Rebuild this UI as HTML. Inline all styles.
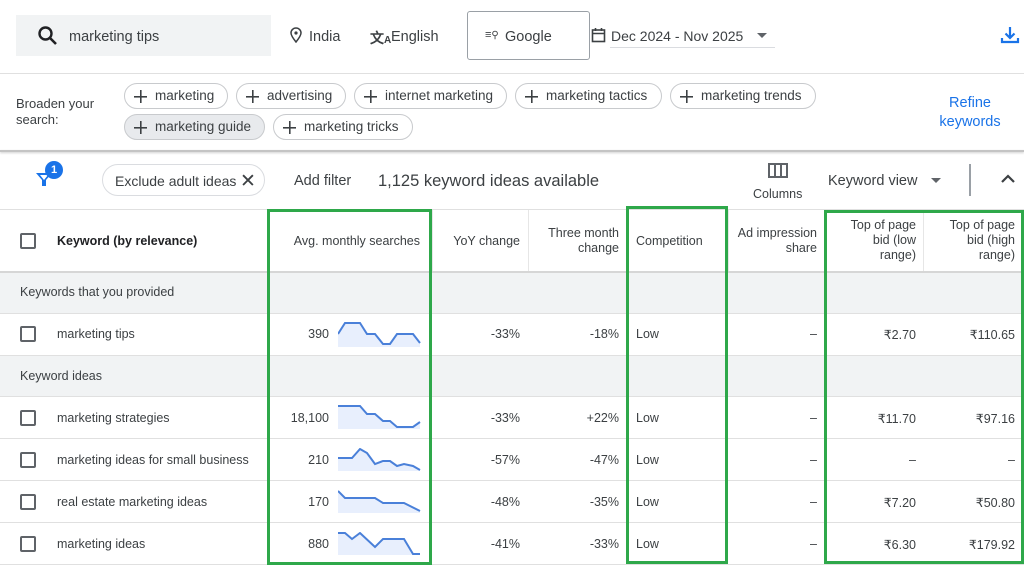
<!DOCTYPE html><html><head><meta charset="utf-8"><style>
*{margin:0;padding:0;box-sizing:border-box}
body{width:1024px;height:566px;overflow:hidden;background:#fff;font-family:"Liberation Sans",Arial,sans-serif;color:#3c4043;position:relative}
.a{position:absolute}
.chip{position:absolute;height:26px;border:1px solid #c8cacd;border-radius:13px;font-size:13.5px;color:#3c4043;line-height:24px;padding-left:30px;white-space:nowrap}
.chip:before{content:"";position:absolute;left:9px;top:6px;width:13px;height:13px;background:linear-gradient(#3c4043,#3c4043) center/13px 1.6px no-repeat,linear-gradient(#3c4043,#3c4043) center/1.6px 13px no-repeat}
.hl{position:absolute;left:0;width:1024px;height:1px;background:#e0e0e0}
.cb{position:absolute;left:20px;width:16px;height:16px;border:2px solid #5f6368;border-radius:2px}
.t{position:absolute;font-size:12.5px;color:#3c4043;white-space:nowrap}
.r{text-align:right}
.g{position:absolute;border:3px solid #2ea84a}
.vl{position:absolute;width:1px;background:#e6e6e6}
</style></head><body>
<!-- top bar -->
<div class="a" style="left:16px;top:15px;width:255px;height:41px;background:#f1f3f4"></div>
<svg class="a" style="left:37px;top:25px" width="22" height="22" viewBox="0 0 22 22"><circle cx="8.5" cy="8.5" r="6" fill="none" stroke="#202124" stroke-width="2.4"/><path d="M13 13l6 6" stroke="#202124" stroke-width="2.6"/></svg>
<div class="t" style="left:69px;top:29px;font-size:14.5px">marketing tips</div>
<svg class="a" style="left:289px;top:27px" width="14" height="16" viewBox="0 0 14 16"><path d="M7 15C3 10 2 8 2 6a5 5 0 0110 0c0 2-1 4-5 9z" fill="none" stroke="#3c4043" stroke-width="1.5"/><circle cx="7" cy="6" r="1.6" fill="#3c4043"/></svg>
<div class="t" style="left:309px;top:29px;font-size:14.5px">India</div>
<div class="t" style="left:370px;top:28px;font-size:14px;font-weight:bold">文<span style="font-size:10px">A</span></div>
<div class="t" style="left:391px;top:29px;font-size:14.5px">English</div>
<div class="a" style="left:467px;top:11px;width:123px;height:49px;border:1px solid #9aa0a6;border-radius:3px"></div>
<div class="t" style="left:485px;top:29px;font-size:11px">≡<span style="font-size:10px">⚲</span></div>
<div class="t" style="left:505px;top:29px;font-size:14.5px">Google</div>
<svg class="a" style="left:591px;top:27px" width="15" height="16" viewBox="0 0 15 16"><rect x="1.5" y="3" width="12" height="11.5" fill="none" stroke="#3c4043" stroke-width="1.6"/><path d="M1.5 6.5h12M4.5 1v3M10.5 1v3" stroke="#3c4043" stroke-width="1.6"/></svg>
<div class="t" style="left:611px;top:28px;font-size:14px">Dec 2024 - Nov 2025</div>
<div class="a" style="left:757px;top:33px;border-left:5px solid transparent;border-right:5px solid transparent;border-top:5px solid #5f6368"></div>
<div class="a" style="left:610px;top:47px;width:165px;height:1px;background:#dadce0"></div>
<svg class="a" style="left:1000px;top:25px" width="20" height="20" viewBox="0 0 20 20"><path d="M10 2v11M5.5 8.5L10 13l4.5-4.5M2 13v4h16v-4" fill="none" stroke="#1a73e8" stroke-width="2.2"/></svg>
<div class="hl" style="top:73px"></div>
<!-- broaden -->
<div class="t" style="left:16px;top:96px;font-size:13px;line-height:16px">Broaden your<br>search:</div>
<div class="chip" style="left:124px;top:83px;width:104px">marketing</div>
<div class="chip" style="left:236px;top:83px;width:110px">advertising</div>
<div class="chip" style="left:354px;top:83px;width:153px">internet marketing</div>
<div class="chip" style="left:515px;top:83px;width:147px">marketing tactics</div>
<div class="chip" style="left:670px;top:83px;width:146px">marketing trends</div>
<div class="chip" style="left:124px;top:114px;width:141px;background:#e8eaed">marketing guide</div>
<div class="chip" style="left:273px;top:114px;width:140px">marketing tricks</div>
<div class="t" style="left:938px;top:94px;font-size:14.5px;color:#1a73e8;text-align:center;width:64px;line-height:19px">Refine<br>keywords</div>
<div class="a" style="left:0;top:150px;width:1024px;height:2px;background:#c4c4c4;box-shadow:0 1px 2px rgba(0,0,0,.2)"></div>
<!-- filter row -->
<svg class="a" style="left:35px;top:170px" width="18" height="18" viewBox="0 0 18 18"><path d="M1 3h16l-6 7v6H7v-6z" fill="#1a73e8"/><path d="M5 5h8l-4 5z" fill="#fff"/></svg>
<div class="a" style="left:45px;top:161px;width:18px;height:18px;border-radius:50%;background:#1a73e8;color:#fff;font-size:11px;font-weight:bold;text-align:center;line-height:18px">1</div>
<div class="a" style="left:102px;top:164px;width:163px;height:32px;border:1px solid #dadce0;border-radius:16px"></div>
<div class="t" style="left:115px;top:173px;font-size:14px">Exclude adult ideas</div>
<div class="t" style="left:240px;top:170px;font-size:19px;color:#3c4043">✕</div>
<div class="t" style="left:294px;top:173px;font-size:14.5px">Add filter</div>
<div class="t" style="left:378px;top:172px;font-size:16.5px">1,125 keyword ideas available</div>
<svg class="a" style="left:768px;top:163px" width="20" height="15" viewBox="0 0 20 15"><rect x="1" y="1" width="18" height="13" fill="none" stroke="#5f6368" stroke-width="2"/><path d="M7 1v13M13 1v13" stroke="#5f6368" stroke-width="2"/></svg>
<div class="t" style="left:753px;top:187px;font-size:12.5px">Columns</div>
<div class="t" style="left:828px;top:173px;font-size:14.5px">Keyword view</div>
<div class="a" style="left:931px;top:178px;border-left:5px solid transparent;border-right:5px solid transparent;border-top:5px solid #5f6368"></div>
<div class="a" style="left:969px;top:164px;width:2px;height:32px;background:#9aa0a6"></div>
<svg class="a" style="left:1000px;top:174px" width="16" height="10" viewBox="0 0 16 10"><path d="M2 8l6-6 6 6" fill="none" stroke="#3c4043" stroke-width="2.2"/></svg>
<div class="hl" style="top:209px"></div>
<!-- header -->
<div class="cb" style="top:233px"></div>
<div class="t" style="left:57px;top:234px;font-weight:bold;color:#202124">Keyword (by relevance)</div>
<div class="t r" style="left:270px;width:150px;top:234px">Avg. monthly searches</div>
<div class="t r" style="left:432px;width:88px;top:234px">YoY change</div>
<div class="t r" style="left:528px;width:91px;top:226px;line-height:15px">Three month<br>change</div>
<div class="t" style="left:636px;top:234px">Competition</div>
<div class="t r" style="left:728px;width:89px;top:226px;line-height:15px">Ad impression<br>share</div>
<div class="t r" style="left:826px;width:90px;top:218px;line-height:15px">Top of page<br>bid (low<br>range)</div>
<div class="t r" style="left:924px;width:91px;top:218px;line-height:15px">Top of page<br>bid (high<br>range)</div>
<div class="vl" style="left:432px;top:210px;height:62px"></div>
<div class="vl" style="left:528px;top:210px;height:62px"></div>
<div class="vl" style="left:728px;top:210px;height:62px"></div>
<div class="vl" style="left:923px;top:210px;height:62px"></div>
<div class="a" style="left:0;top:271px;width:1024px;height:2px;background:#d6d6d6"></div>
<!-- section bands -->
<div class="a" style="left:0;top:273px;width:1024px;height:40px;background:#f1f3f4"></div>
<div class="t" style="left:20px;top:285px;font-size:12.5px">Keywords that you provided</div>
<div class="hl" style="top:313px"></div>
<div class="a" style="left:0;top:355px;width:1024px;height:41px;background:#f1f3f4;border-top:1px solid #e0e0e0"></div>
<div class="t" style="left:20px;top:369px;font-size:12.5px">Keyword ideas</div>
<div class="hl" style="top:396px"></div>
<div class="hl" style="top:438px"></div>
<div class="hl" style="top:480px"></div>
<div class="hl" style="top:522px"></div>
<div class="hl" style="top:564px"></div>
<!-- rows -->
<div class="cb" style="top:326px"></div><div class="t" style="left:57px;top:327px">marketing tips</div>
<div class="t r" style="left:270px;width:59px;top:327px">390</div>
<div class="t r" style="left:432px;width:88px;top:327px">-33%</div><div class="t r" style="left:528px;width:91px;top:327px">-18%</div>
<div class="t" style="left:636px;top:327px">Low</div><div class="t r" style="left:728px;width:89px;top:327px">–</div>
<div class="t r" style="left:826px;width:90px;top:327px">₹2.70</div><div class="t r" style="left:924px;width:91px;top:327px">₹110.65</div>

<div class="cb" style="top:410px"></div><div class="t" style="left:57px;top:411px">marketing strategies</div>
<div class="t r" style="left:270px;width:59px;top:411px">18,100</div>
<div class="t r" style="left:432px;width:88px;top:411px">-33%</div><div class="t r" style="left:528px;width:91px;top:411px">+22%</div>
<div class="t" style="left:636px;top:411px">Low</div><div class="t r" style="left:728px;width:89px;top:411px">–</div>
<div class="t r" style="left:826px;width:90px;top:411px">₹11.70</div><div class="t r" style="left:924px;width:91px;top:411px">₹97.16</div>

<div class="cb" style="top:452px"></div><div class="t" style="left:57px;top:453px">marketing ideas for small business</div>
<div class="t r" style="left:270px;width:59px;top:453px">210</div>
<div class="t r" style="left:432px;width:88px;top:453px">-57%</div><div class="t r" style="left:528px;width:91px;top:453px">-47%</div>
<div class="t" style="left:636px;top:453px">Low</div><div class="t r" style="left:728px;width:89px;top:453px">–</div>
<div class="t r" style="left:826px;width:90px;top:453px">–</div><div class="t r" style="left:924px;width:91px;top:453px">–</div>

<div class="cb" style="top:494px"></div><div class="t" style="left:57px;top:495px">real estate marketing ideas</div>
<div class="t r" style="left:270px;width:59px;top:495px">170</div>
<div class="t r" style="left:432px;width:88px;top:495px">-48%</div><div class="t r" style="left:528px;width:91px;top:495px">-35%</div>
<div class="t" style="left:636px;top:495px">Low</div><div class="t r" style="left:728px;width:89px;top:495px">–</div>
<div class="t r" style="left:826px;width:90px;top:495px">₹7.20</div><div class="t r" style="left:924px;width:91px;top:495px">₹50.80</div>

<div class="cb" style="top:536px"></div><div class="t" style="left:57px;top:537px">marketing ideas</div>
<div class="t r" style="left:270px;width:59px;top:537px">880</div>
<div class="t r" style="left:432px;width:88px;top:537px">-41%</div><div class="t r" style="left:528px;width:91px;top:537px">-33%</div>
<div class="t" style="left:636px;top:537px">Low</div><div class="t r" style="left:728px;width:89px;top:537px">–</div>
<div class="t r" style="left:826px;width:90px;top:537px">₹6.30</div><div class="t r" style="left:924px;width:91px;top:537px">₹179.92</div>

<!-- sparklines -->
<svg class="a" style="left:338px;top:321px" width="84" height="26"><path d="M0 13L7 2L22 2L29 13L37 13L45 23L52 23L59 13L75 13L82 22L82 26L0 26Z" fill="#e8effd"/><polyline points="0,13 7,2 22,2 29,13 37,13 45,23 52,23 59,13 75,13 82,22" fill="none" stroke="#4a80d9" stroke-width="2"/></svg>
<svg class="a" style="left:338px;top:405px" width="84" height="26"><path d="M0 1L22 1L29 9L37 9L45 16L52 16L59 22L75 22L82 17L82 24L0 24Z" fill="#e8effd"/><polyline points="0,1 22,1 29,9 37,9 45,16 52,16 59,22 75,22 82,17" fill="none" stroke="#4a80d9" stroke-width="2"/></svg>
<svg class="a" style="left:338px;top:448px" width="84" height="26"><path d="M0 10L14 10L22 1L29 5L37 16L45 13L52 13L59 18L66 16L75 18L82 22L82 23L0 23Z" fill="#e8effd"/><polyline points="0,10 14,10 22,1 29,5 37,16 45,13 52,13 59,18 66,16 75,18 82,22" fill="none" stroke="#4a80d9" stroke-width="2"/></svg>
<svg class="a" style="left:338px;top:490px" width="84" height="26"><path d="M0 1L7 8L37 8L45 13L66 13L82 21L82 23L0 23Z" fill="#e8effd"/><polyline points="0,1 7,8 37,8 45,13 66,13 82,21" fill="none" stroke="#4a80d9" stroke-width="2"/></svg>
<svg class="a" style="left:338px;top:532px" width="84" height="26"><path d="M0 1L7 1L14 7L22 1L37 15L45 7L66 7L75 22L82 22L82 23L0 23Z" fill="#e8effd"/><polyline points="0,1 7,1 14,7 22,1 37,15 45,7 66,7 75,22 82,22" fill="none" stroke="#4a80d9" stroke-width="2"/></svg>

<!-- green boxes -->
<div class="g" style="left:267px;top:209px;width:165px;height:356px"></div>
<div class="g" style="left:626px;top:206px;width:102px;height:358px"></div>
<div class="g" style="left:824px;top:210px;width:200px;height:354px"></div>
</body></html>
